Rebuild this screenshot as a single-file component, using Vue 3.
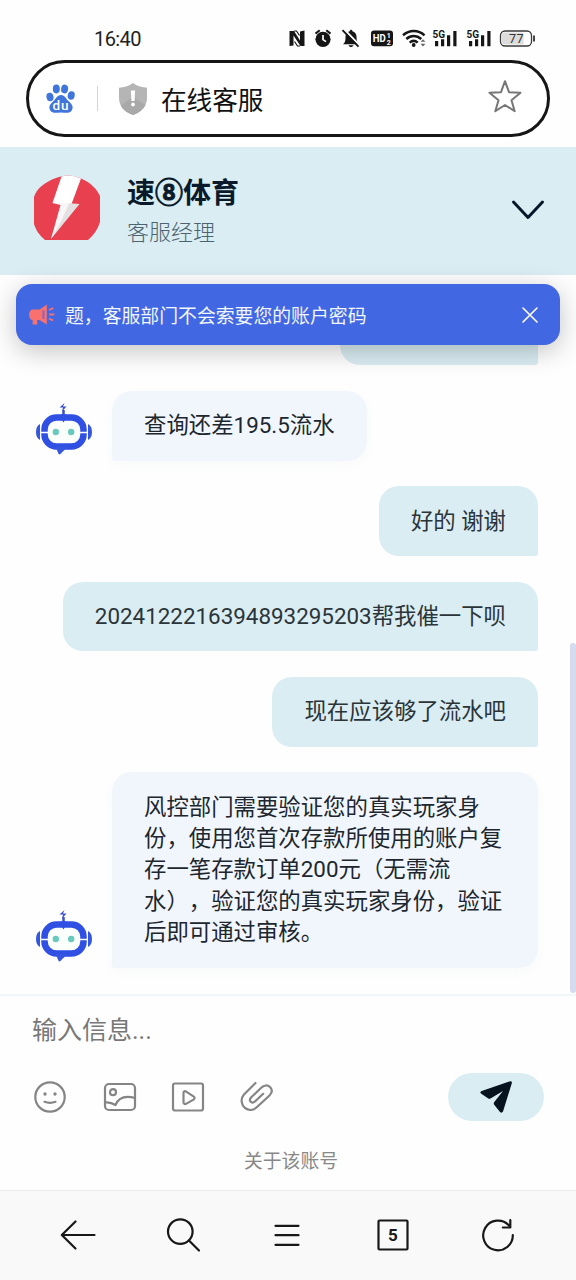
<script setup>
const messages = [
  { from: 'me', text: '请稍等一下哦' },
  { from: 'bot', text: '查询还差195.5流水' },
  { from: 'me', text: '好的 谢谢' },
  { from: 'me', text: '2024122216394893295203帮我催一下呗' },
  { from: 'me', text: '现在应该够了流水吧' },
  {
    from: 'bot',
    text: '风控部门需要验证您的真实玩家身份，使用您首次存款所使用的账户复存一笔存款订单200元（无需流水），验证您的真实玩家身份，验证后即可通过审核。',
  },
]
</script>

<template>
  <div class="screen">
    <div class="status">
      <span class="clock">16:40</span>
      <svg class="status-icons" width="250" height="24" viewBox="0 0 250 24">
        <g fill="#161616">
          <path d="M1.500 5H6l6 9.500V5.500L16.500 4.500V20H12.500L5.500 9.500V19.500L1.500 20z" />
        </g>
        <path d="M6 5h2.500l3 4.500M12 20H9.500l-3-4.500" fill="none" stroke="#161616" stroke-width="1.200" />
        <circle cx="35" cy="13.300" r="7.600" fill="#161616" />
        <path d="M27.500 7.600l4.200-3.400M42.500 7.600l-4.200-3.400" stroke="#161616" stroke-width="2" />
        <path d="M35 9v4.600l3 2" fill="none" stroke="#fff" stroke-width="1.700" />
        <path d="M55 18.200c2-2 2.500-3.200 2.500-6.800 0-4 2-5.600 4.300-6.200 0-2 2.600-2 2.600 0 2.500.6 4.200 2.600 4.200 6.200 0 3.600.5 4.800 2.400 6.800zM60.500 19.200h5c-.8 2.400-4.200 2.400-5 0z" fill="#161616" />
        <path d="M56 3.200l16 16.500" stroke="#fff" stroke-width="2" />
        <path d="M54.500 4.200l16 16.500" stroke="#161616" stroke-width="1.900" />
        <rect x="83" y="4.600" width="22" height="15.600" rx="3" fill="#161616" />
        <text x="84.800" y="16.300" font-size="10.500" font-weight="700" fill="#fff" textLength="13" lengthAdjust="spacingAndGlyphs">HD</text>
        <text x="98.800" y="11.700" font-size="7" font-weight="700" fill="#fff">1</text>
        <text x="98.800" y="18.600" font-size="7" font-weight="700" fill="#fff">2</text>
        <g fill="none" stroke="#161616" stroke-width="2.500">
          <path d="M115 9.300c6.300-5.700 15.300-5.700 21.500 0M118.300 13c4.500-4 10.500-4 15 0M121.700 16.600c2.500-2.200 5.500-2.200 8 0" />
        </g>
        <circle cx="125.700" cy="19" r="1.900" fill="#161616" />
        <path d="M132.500 15.800l2.500-2.600 2.500 2.600zM132.500 17.800l2.500 2.600 2.500-2.600z" fill="#666" />
        <g fill="#161616">
          <text x="144.500" y="12" font-size="10" font-weight="700">5G</text>
          <path d="M147 15h3.200v5.200H147zM153 13.200h3.200v7h-3.200zM159 9.300h3.200v10.900H159zM165.300 5h3.200v15.200h-3.200z" />
          <text x="178.500" y="12" font-size="10" font-weight="700">5G</text>
          <path d="M181 15h3.200v5.200H181zM187 13.200h3.200v7h-3.200zM193 9.300h3.200v10.900H193zM199.300 5h3.200v15.200h-3.200z" />
        </g>
        <rect x="212.500" y="5" width="31" height="15" rx="4.500" fill="#fff" stroke="#3a3a3a" stroke-width="1.300" />
        <path d="M216.500 6.500h19v12h-19q-2.500 0-2.500-2.500v-7q0-2.500 2.500-2.500z" fill="#dcdcdc" />
        <path d="M246 9.500v6" stroke="#333" stroke-width="1.800" />
        <text x="221" y="17" font-size="12.500" fill="#333" textLength="14.500">77</text>
      </svg>
    </div>

    <div class="address">
      <svg class="paw" width="30" height="32" viewBox="0 0 30 32">
        <g fill="#4076db">
          <ellipse cx="4" cy="14" rx="3.500" ry="4.300" transform="rotate(-12 4 14)" />
          <ellipse cx="10.300" cy="6" rx="3.500" ry="4.400" />
          <ellipse cx="18.600" cy="6" rx="3.500" ry="4.400" transform="rotate(8 18.600 6)" />
          <ellipse cx="25.200" cy="12.500" rx="3.500" ry="4.300" transform="rotate(12 25.200 12.500)" />
          <path d="M15 12c4 0 5 4 8 6.500 3.500 3 4.500 5.500 3 8.500-2 4-7 2.500-11 2.500S6 31 4 27c-1.500-3-.5-5.500 3-8.500C10 16 11 12 15 12z" />
        </g>
        <text x="6.500" y="27.300" font-size="13.500" font-weight="500" fill="#fff" textLength="16">du</text>
      </svg>
      <i class="divider"></i>
      <svg class="shield" width="30" height="34" viewBox="0 0 30 34">
        <path d="M15 1c5 3.400 9 4.400 14 4.800V16c0 8.500-5.500 14-14 17C6.500 30 1 24.500 1 16V5.800C6 5.400 10 4.400 15 1z" fill="#b5b5b5" />
        <path d="M27.500 23c-2.300 4.700-6.600 8-12.500 10C9.200 31 5 28 2.700 23.500L15 15z" fill="#a9a9a9" />
        <path d="M12.900 8.500h4.200L16.600 19h-3.200z" fill="#fff" /><circle cx="15" cy="22.500" r="1.900" fill="#fff" />
      </svg>
      <span class="page-name">在线客服</span>
      <svg class="star" width="34" height="34" viewBox="0 0 34 34" fill="none" stroke="#777" stroke-width="2" stroke-linejoin="round">
        <path d="M17 1.200l4 11 11.500.5-9 7.500 3.200 11L17 25l-9.700 6.200 3.200-11-9-7.500 11.500-.5z" />
      </svg>
    </div>

    <header class="head">
      <svg class="brand" width="68" height="68" viewBox="0 0 68 68">
        <path d="M23 3C31-.5 39-.5 47 3c10 4 17 11 20 18v26c-2 7-6 13-12 18H12C6 60 3 55 1 49V22C4 13 12 7 23 3z" fill="#e8404f" />
        <path d="M28.500 1.500Q38-1 48 3.500L38.500 29l-19-1z" fill="#fff" />
        <path d="M34 28l12.500 1L18 64l10.500-31z" fill="#e4e1e2" />
        <path d="M19.500 28l17-.5-8 18L18 64l9.500-34z" fill="#f8f6f6" />
      </svg>
      <div class="identity">
        <h1>速<span class="badge">⑧</span>体育</h1>
        <p>客服经理</p>
      </div>
      <svg class="chevron" width="34" height="22" viewBox="0 0 34 22" fill="none" stroke="#07172a" stroke-width="3" stroke-linecap="round" stroke-linejoin="round">
        <path d="M2.500 3l14.500 15.500L31.500 3" />
      </svg>
    </header>

    <main class="chat">
      <div class="notice">
        <svg width="26" height="24" viewBox="0 0 26 24">
          <path d="M2.500 6.500h8v10.500H8.200v4.500H3.600V17H2.500Q0 15 0 11.700T2.500 6.500z" fill="#f8716f" />
          <path d="M10 7l7.800-5.500v20L10 16.700z" fill="#f8716f" />
          <path d="M14.500 7.500v8.500" stroke="#8f62bd" stroke-width="2" />
          <path d="M20 7l4.200-1.800M20.300 11.500h5M20 15.700l4.200 1.800" stroke="#f8716f" stroke-width="1.900" />
        </svg>
        <span>题，客服部门不会索要您的账户密码</span>
        <svg class="close" width="18" height="18" viewBox="0 0 18 18" stroke="#fff" stroke-width="1.600" stroke-linecap="round">
          <path d="M2 2l14 14M16 2L2 16" />
        </svg>
      </div>

      <div v-for="(m, i) in messages" :key="i" class="row" :class="m.from">
        <svg v-if="m.from === 'bot'" class="robot" width="58" height="52" viewBox="0 0 58 52">
          <path d="M29.500 0l-5 4.500h3.500l-1 4 4.500-5h-3.500z" fill="#3b50c8" />
          <path d="M28.500 7v5" stroke="#3b50c8" stroke-width="2.500" />
          <path d="M5 21Q1 23 1 29t4 8zM53 21q4 2 4 8t-4 8z" fill="#3557e0" />
          <rect x="9.500" y="14.500" width="39" height="29" rx="12" fill="#fbfffc" stroke="#2f50e2" stroke-width="6.500" />
          <path d="M21 44h12q-3 2-8 7.500-2-.5-2.500-3z" fill="#3557e0" />
          <path d="M24.500 12.500l4-2 4 2-4 7z" fill="#2f50e2" />
          <path d="M5 29.500h8M45 29.500h8" stroke="#fff" stroke-width="1.600" />
          <circle cx="20.800" cy="29" r="3.200" fill="#69c9bd" /><circle cx="36.200" cy="29" r="3.200" fill="#69c9bd" />
        </svg>
        <div class="bubble">{{ m.text }}</div>
      </div>
      <i class="scrollbar"></i>
    </main>

    <section class="composer">
      <div class="placeholder">输入信息...</div>
      <div class="tools">
        <svg width="34" height="34" viewBox="0 0 34 34">
          <circle cx="17" cy="17" r="14.700" /><path d="M11.500 21.800q5.500 2 11 0" />
          <circle class="dot" cx="12" cy="14" r="1.700" /><circle class="dot" cx="22" cy="14" r="1.700" />
        </svg>
        <svg width="34" height="34" viewBox="0 0 34 34">
          <rect x="2" y="4" width="30" height="26" rx="4" /><circle cx="10" cy="12.200" r="3" />
          <path d="M2 22.500q5-.8 10.500 2.500Q17 14 32 18" />
        </svg>
        <svg width="34" height="34" viewBox="0 0 34 34">
          <rect x="2" y="3.500" width="30" height="27" rx="2" />
          <path d="M12.500 13v9q0 3 3 1.600l7-4q2.200-1.600 0-3.200l-7-4.600q-3-1.800-3 1.200z" />
        </svg>
        <svg width="34" height="34" viewBox="0 0 34 34">
          <path d="M15.500 3L4 14.500C0 19 1.500 25 5 28c3.700 2.800 8.500 2.300 12-1l12.500-11.500c3-3.200 2.800-6.300.5-8.500-2.500-2.300-6-2-8.800.8L11 17.500c-1.500 1.800-1.400 3.200-.3 4.300 1.200 1.200 3 1 4.500-.5l8-7.500" />
        </svg>
        <button class="send">
          <svg width="34" height="34" viewBox="0 0 34 34">
            <path d="M31.500 1.200q1.800 0 1.300 2L24 31.500q-1.200 2-3 .5l-6-7.500q-.7-1.500.5-2.700L24 11 11.500 18.500q-1.200.6-2.200 0l-7-4.800q-2.200-1.700.4-2.800z" />
          </svg>
        </button>
      </div>
      <div class="about">关于该账号</div>
    </section>

    <nav class="browser-bar">
      <svg width="36" height="36" viewBox="0 0 36 36"><path d="M34.500 18H2M15.500 4.500L1.800 18l13.700 13.500" /></svg>
      <svg width="36" height="36" viewBox="0 0 36 36"><circle cx="15.300" cy="14.600" r="12.300" /><path d="M24 23.500l10 10" /></svg>
      <svg width="36" height="36" viewBox="0 0 36 36"><path d="M5.500 8.800h23M5.500 18.200h23M5.500 27.800h23" /></svg>
      <svg width="36" height="36" viewBox="0 0 36 36"><rect x="3.500" y="3.500" width="29" height="29" rx="1" /><text x="18" y="24.300" text-anchor="middle">5</text></svg>
      <svg width="36" height="36" viewBox="0 0 36 36"><path d="M32.800 18A14.800 14.800 0 1 1 28.800 8.300M30.300 3v7.500h-7.500" /></svg>
    </nav>
  </div>
</template>

<style>
body {
  background: #fff;
}
</style>

<style scoped>
.screen {
  width: 576px;
  height: 1280px;
  display: flex;
  flex-direction: column;
  overflow: hidden;
  background: #fefefe;
  font-family: Roboto, "Noto Sans CJK SC", sans-serif;
  text-spacing-trim: space-all;
}
svg {
  flex: none;
  display: block;
}
.status {
  height: 60px;
  box-sizing: border-box;
  padding: 18px 38px 0 94px;
  display: flex;
  align-items: flex-start;
  justify-content: space-between;
}
.clock {
  font-size: 20px;
  line-height: 43px;
  color: #222;
  letter-spacing: -0.600px;
}
.status-icons {
  margin-top: 8px;
}
.address {
  height: 77px;
  box-sizing: border-box;
  margin: 0 26px;
  border: 3px solid #161616;
  border-radius: 39px;
  display: flex;
  align-items: center;
  padding: 0 25px 0 17px;
  background: #fff;
}
.divider {
  width: 1px;
  height: 25px;
  background: #d6d6d6;
  margin: 0 20px 0 21px;
}
.page-name {
  flex: 1;
  margin-left: 13px;
  font-size: 25.600px;
  color: #111;
}
.star {
  margin-top: -3px;
}
.head {
  height: 128px;
  box-sizing: border-box;
  margin-top: 10px;
  padding: 0 31px 0 33px;
  display: flex;
  background: #daedf3;
}
.brand {
  margin-top: 28px;
}
.identity {
  flex: 1;
  padding: 27px 0 0 26px;
}
h1 {
  margin: 0;
  font-size: 28px;
  line-height: 40px;
  font-weight: 700;
  color: #0a1a2b;
}
.badge {
  -webkit-text-stroke: 0.900px #0a1a2b;
}
p {
  margin: 4px 0 0;
  font-size: 22px;
  line-height: 30px;
  font-weight: 300;
  color: #4d6470;
}
.chevron {
  margin-top: 52px;
}
.chat {
  height: 719px;
  box-sizing: border-box;
  position: relative;
  padding: 0 38px 26.500px 35px;
  display: flex;
  flex-direction: column;
  justify-content: flex-end;
  gap: 25.600px;
}
.notice {
  position: absolute;
  z-index: 1;
  top: 9px;
  left: 16px;
  right: 16px;
  height: 61px;
  box-sizing: border-box;
  padding: 0 21px 0 13px;
  display: flex;
  align-items: center;
  border-radius: 16px;
  background: #4267e2;
  box-shadow: 0 6px 26px rgba(0, 0, 0, 0.24);
  color: #f1f6ff;
  font-size: 18.850px;
}
.notice span {
  flex: 1;
  margin-left: 10px;
  margin-top: -1px;
}
.row {
  display: flex;
  align-items: flex-end;
}
.me {
  justify-content: flex-end;
}
.robot {
  margin: 0 19px 6px 0;
}
.bubble {
  box-sizing: border-box;
  padding: 19.400px 32px 19px;
  font-size: 22.400px;
  line-height: 31.360px;
  color: #20262e;
}
.bot .bubble {
  border-radius: 20px 20px 20px 3px;
  background: #f1f6fd;
  box-shadow: 0 4px 12px rgba(60, 80, 120, 0.03);
}
.me .bubble {
  border-radius: 20px 20px 3px 20px;
  background: #daedf3;
  color: #2b3439;
}
.scrollbar {
  position: absolute;
  right: 0;
  bottom: 1px;
  width: 6px;
  height: 350px;
  border-radius: 3px;
  background: #d5daef;
}
.composer {
  height: 196px;
  box-sizing: border-box;
  border-top: 2px solid #f0f7fb;
}
.placeholder {
  padding: 15px 32px 0;
  font-size: 25px;
  line-height: 40px;
  color: #777;
}
.tools {
  height: 48px;
  margin: 22px 32px 0 33px;
  display: flex;
  align-items: center;
  gap: 34.600px;
  fill: none;
  stroke: #858585;
  stroke-width: 2.200px;
  stroke-linecap: round;
  stroke-linejoin: round;
}
.tools > svg + svg {
  position: relative;
  left: 1px;
}
.dot {
  fill: #858585;
  stroke: none;
}
.send {
  width: 96px;
  height: 48px;
  margin-left: auto;
  padding: 0;
  border: 0;
  border-radius: 24px;
  background: #daedf3;
  display: flex;
  align-items: center;
  justify-content: center;
}
.send svg {
  fill: #07121f;
  stroke: none;
}
.about {
  margin-top: 27px;
  text-align: center;
  font-size: 18.800px;
  line-height: 28px;
  color: #888;
  padding-left: 6px;
}
.browser-bar {
  height: 90px;
  box-sizing: border-box;
  padding: 0 60px;
  display: flex;
  align-items: center;
  justify-content: space-between;
  border-top: 1px solid #ebebeb;
  background: #f9f9f9;
  fill: none;
  stroke: #181818;
  stroke-width: 2.200px;
  stroke-linecap: round;
  stroke-linejoin: round;
}
.browser-bar svg {
  margin-top: -1px;
}
.browser-bar text {
  fill: #181818;
  stroke: none;
  font-size: 17px;
  font-weight: 700;
}
</style>
